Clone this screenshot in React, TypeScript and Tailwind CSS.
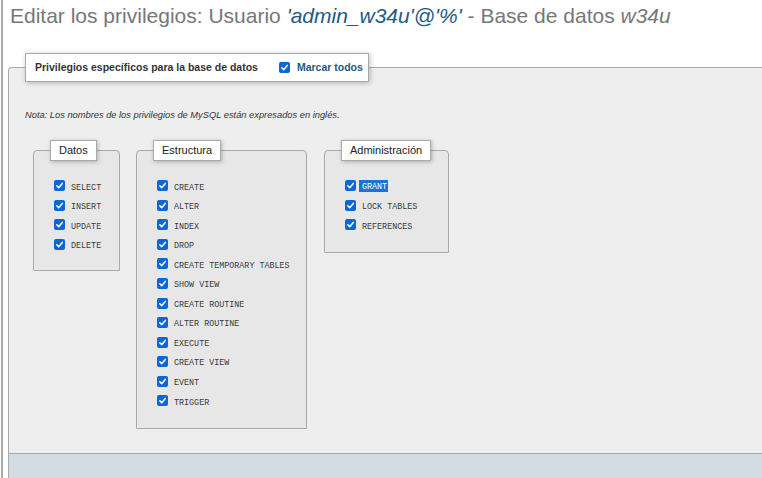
import React from "react";

const Check = () => (
  <span className="inline-flex w-[11px] h-[11px] shrink-0 items-center justify-center rounded-[2px] bg-[#0b66d9]">
    <svg width="9" height="9" viewBox="0 0 10 10">
      <path d="M2 5.3 L4.1 7.4 L8.1 2.7" stroke="white" strokeWidth="1.7" fill="none" strokeLinecap="round" strokeLinejoin="round" />
    </svg>
  </span>
);

const Row = ({ label, selected }: { label: string; selected?: boolean }) => (
  <div className="flex items-center h-[19.55px]">
    <Check />
    {selected ? (
      <span className="ml-[3px] pl-[3px] pr-[1px] pt-[3px] pb-[1px] bg-[#1a73d9] text-white font-['Liberation_Mono','Courier_New',monospace] text-[8.4px] leading-[8px] whitespace-pre">
        {label}
      </span>
    ) : (
      <span className="ml-[6px] pt-[4px] text-[#3a3a3a] font-['Liberation_Mono','Courier_New',monospace] text-[8.4px] leading-none whitespace-pre">
        {label}
      </span>
    )}
  </div>
);

const Sub = ({
  title,
  items,
  w,
  h,
  ml,
  selected,
}: {
  title: string;
  items: string[];
  w: string;
  h: string;
  ml: string;
  selected?: string;
}) => (
  <div className={`flex flex-col border border-[#aaa] rounded-t-[4px] bg-[#e7e7e7] ${w} ${h} ${ml}`}>
    <div className="self-start ml-[16px] -mt-[11px] h-[21px] px-[8px] flex items-center bg-white border border-[#aaa] shadow-[1px_1px_4px_rgba(0,0,0,0.25)] text-[11px] text-[#222]">
      {title}
    </div>
    <div className="pl-[20px] pt-[15px]">
      {items.map((it) => (
        <Row key={it} label={it} selected={it === selected} />
      ))}
    </div>
  </div>
);

export default function App() {
  return (
    <div className="w-[762px] h-[478px] overflow-hidden bg-white font-['Liberation_Sans',Arial,sans-serif]">
      <div className="ml-[1px] h-full border-l-2 border-[#aaa] flex flex-col">
        <h2 className="pl-[7px] pt-[5px] text-[21px] leading-[21px] text-[#777] whitespace-nowrap font-normal">
          Editar los privilegios: Usuario{" "}
          <i className="text-[#235a81]">'admin_w34u'@'%'</i> - Base de datos <i>w34u</i>
        </h2>
        <div className="mt-[41px] ml-[5px] h-[387px] border-t border-l border-b border-[#aaa] rounded-tl-[4px] bg-[#eeeeee] flex flex-col">
          <div className="self-start ml-[16px] -mt-[15px] h-[29px] w-[344px] pl-[9px] pr-[8px] flex items-center bg-white border border-[#aaa] shadow-[1px_1px_5px_rgba(0,0,0,0.25)]">
            <span className="text-[10.5px] font-bold text-[#333] whitespace-nowrap">
              Privilegios específicos para la base de datos
            </span>
            <span className="ml-[21px] flex items-center">
              <Check />
              <span className="ml-[7px] text-[10.5px] font-bold text-[#235a81] whitespace-nowrap">Marcar todos</span>
            </span>
          </div>
          <p className="ml-[16px] mt-[27px] h-[12px] leading-[12px] text-[9.3px] italic text-[#333] whitespace-nowrap">
            Nota: Los nombres de los privilegios de MySQL están expresados en inglés.
          </p>
          <div className="mt-[29px] ml-[16px] flex items-start">
            <Sub
              title="Datos"
              items={["SELECT", "INSERT", "UPDATE", "DELETE"]}
              w="w-[87px]"
              h="h-[121px]"
              ml="ml-[8px]"
            />
            <Sub
              title="Estructura"
              items={[
                "CREATE",
                "ALTER",
                "INDEX",
                "DROP",
                "CREATE TEMPORARY TABLES",
                "SHOW VIEW",
                "CREATE ROUTINE",
                "ALTER ROUTINE",
                "EXECUTE",
                "CREATE VIEW",
                "EVENT",
                "TRIGGER",
              ]}
              w="w-[171px]"
              h="h-[279px]"
              ml="ml-[16px]"
            />
            <Sub
              title="Administración"
              items={["GRANT", "LOCK TABLES", "REFERENCES"]}
              w="w-[125px]"
              h="h-[103px]"
              ml="ml-[17px]"
              selected="GRANT"
            />
          </div>
        </div>
        <div className="ml-[5px] flex-1 border-l border-[#aaa] bg-[#d3dce3]" />
      </div>
    </div>
  );
}
